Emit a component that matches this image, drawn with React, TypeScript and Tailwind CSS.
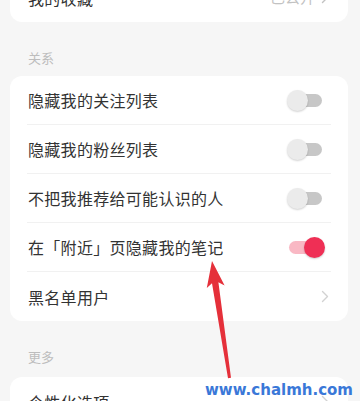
import { ReactNode } from "react"

const CJK = "font-['Noto_Sans_CJK_SC','Noto_Sans',sans-serif]"

function Chevron({ className = "" }: { className?: string }) {
  return (
    <svg width="8" height="13" viewBox="0 0 8 13" className={className}>
      <polyline points="1.5,1.5 6.5,6.5 1.5,11.5" fill="none" stroke="currentColor" strokeWidth="1.4" strokeLinecap="round" strokeLinejoin="round" />
    </svg>
  )
}

function Toggle({ on = false }: { on?: boolean }) {
  return (
    <div className="relative w-[38px] h-[21px] mr-[6px]">
      <div
        className={
          on
            ? "absolute left-[2px] right-[3px] top-[4px] h-[13px] rounded-full bg-[#f9b8c4]"
            : "absolute left-[3px] right-[3px] top-[4px] h-[13px] rounded-full bg-[#c7c7c7]"
        }
      />
      <div
        className={
          on
            ? "absolute right-0 top-0 w-[21px] h-[21px] rounded-full bg-[#ef2f55] shadow-[0_1px_2px_rgba(0,0,0,0.2)]"
            : "absolute left-0 top-0 w-[21px] h-[21px] rounded-full bg-[#ebebeb] shadow-[0_1px_2px_rgba(0,0,0,0.18)]"
        }
      />
    </div>
  )
}

function Row({ label, right, last = false }: { label: string; right?: ReactNode; last?: boolean }) {
  return (
    <div className={last ? "flex items-center justify-between h-[49px]" : "flex items-center justify-between h-[49px] border-b border-[#f1f1f1]"}>
      <span className="pl-px text-[16px] tracking-[0.3px] text-[#333333]">{label}</span>
      {right}
    </div>
  )
}

function SectionLabel({ text, bottom }: { text: string; bottom: string }) {
  return (
    <div className={`pl-[18px] pt-[27px] ${bottom} text-[13px] leading-[17px] text-[#bdbdbd]`}>{text}</div>
  )
}

export default function App() {
  return (
    <div className={`relative w-[360px] h-[401px] overflow-hidden bg-[#f6f6f6] ${CJK}`}>
      <div className="pl-[10px] pr-[12px] -mt-[27px]">
        {/* 我的收藏 */}
        <div className="bg-white rounded-[12px] px-[17px]">
          <Row
            label="我的收藏"
            last
            right={
              <div className="flex items-center gap-[6px] mr-[2px] text-[#c2c2c2]">
                <span className="text-[15px]">已公开</span>
                <Chevron />
              </div>
            }
          />
        </div>

        <SectionLabel text="关系" bottom="pb-[10px]" />
        <div className="bg-white rounded-[12px] px-[17px]">
          <Row label="隐藏我的关注列表" right={<Toggle />} />
          <Row label="隐藏我的粉丝列表" right={<Toggle />} />
          <Row label="不把我推荐给可能认识的人" right={<Toggle />} />
          <Row label="在「附近」页隐藏我的笔记" right={<Toggle on />} />
          <Row label="黑名单用户" last right={<Chevron className="mr-[2px] text-[#d2d2d2]" />} />
        </div>

        <SectionLabel text="更多" bottom="pb-[12px]" />
        <div className="bg-white rounded-[12px] px-[17px]">
          <Row label="个性化选项" last right={<Chevron className="mr-[2px] text-[#d2d2d2]" />} />
        </div>
      </div>

      {/* red annotation arrow */}
      <svg className="absolute left-0 top-0 pointer-events-none" width="360" height="401" viewBox="0 0 360 401">
        <polygon
          points="212,261 224.6,285.4 218.4,282.3 231,377.8 228,378.2 212,283.3 206.8,288"
          fill="#e5303a"
        />
      </svg>

      {/* watermark */}
      <div className="absolute left-[205px] top-[380px] text-[15px] leading-[20px] font-bold text-[#3a78d8] font-['DejaVu_Sans',sans-serif]">
        www.chalmh.com
      </div>
    </div>
  )
}
